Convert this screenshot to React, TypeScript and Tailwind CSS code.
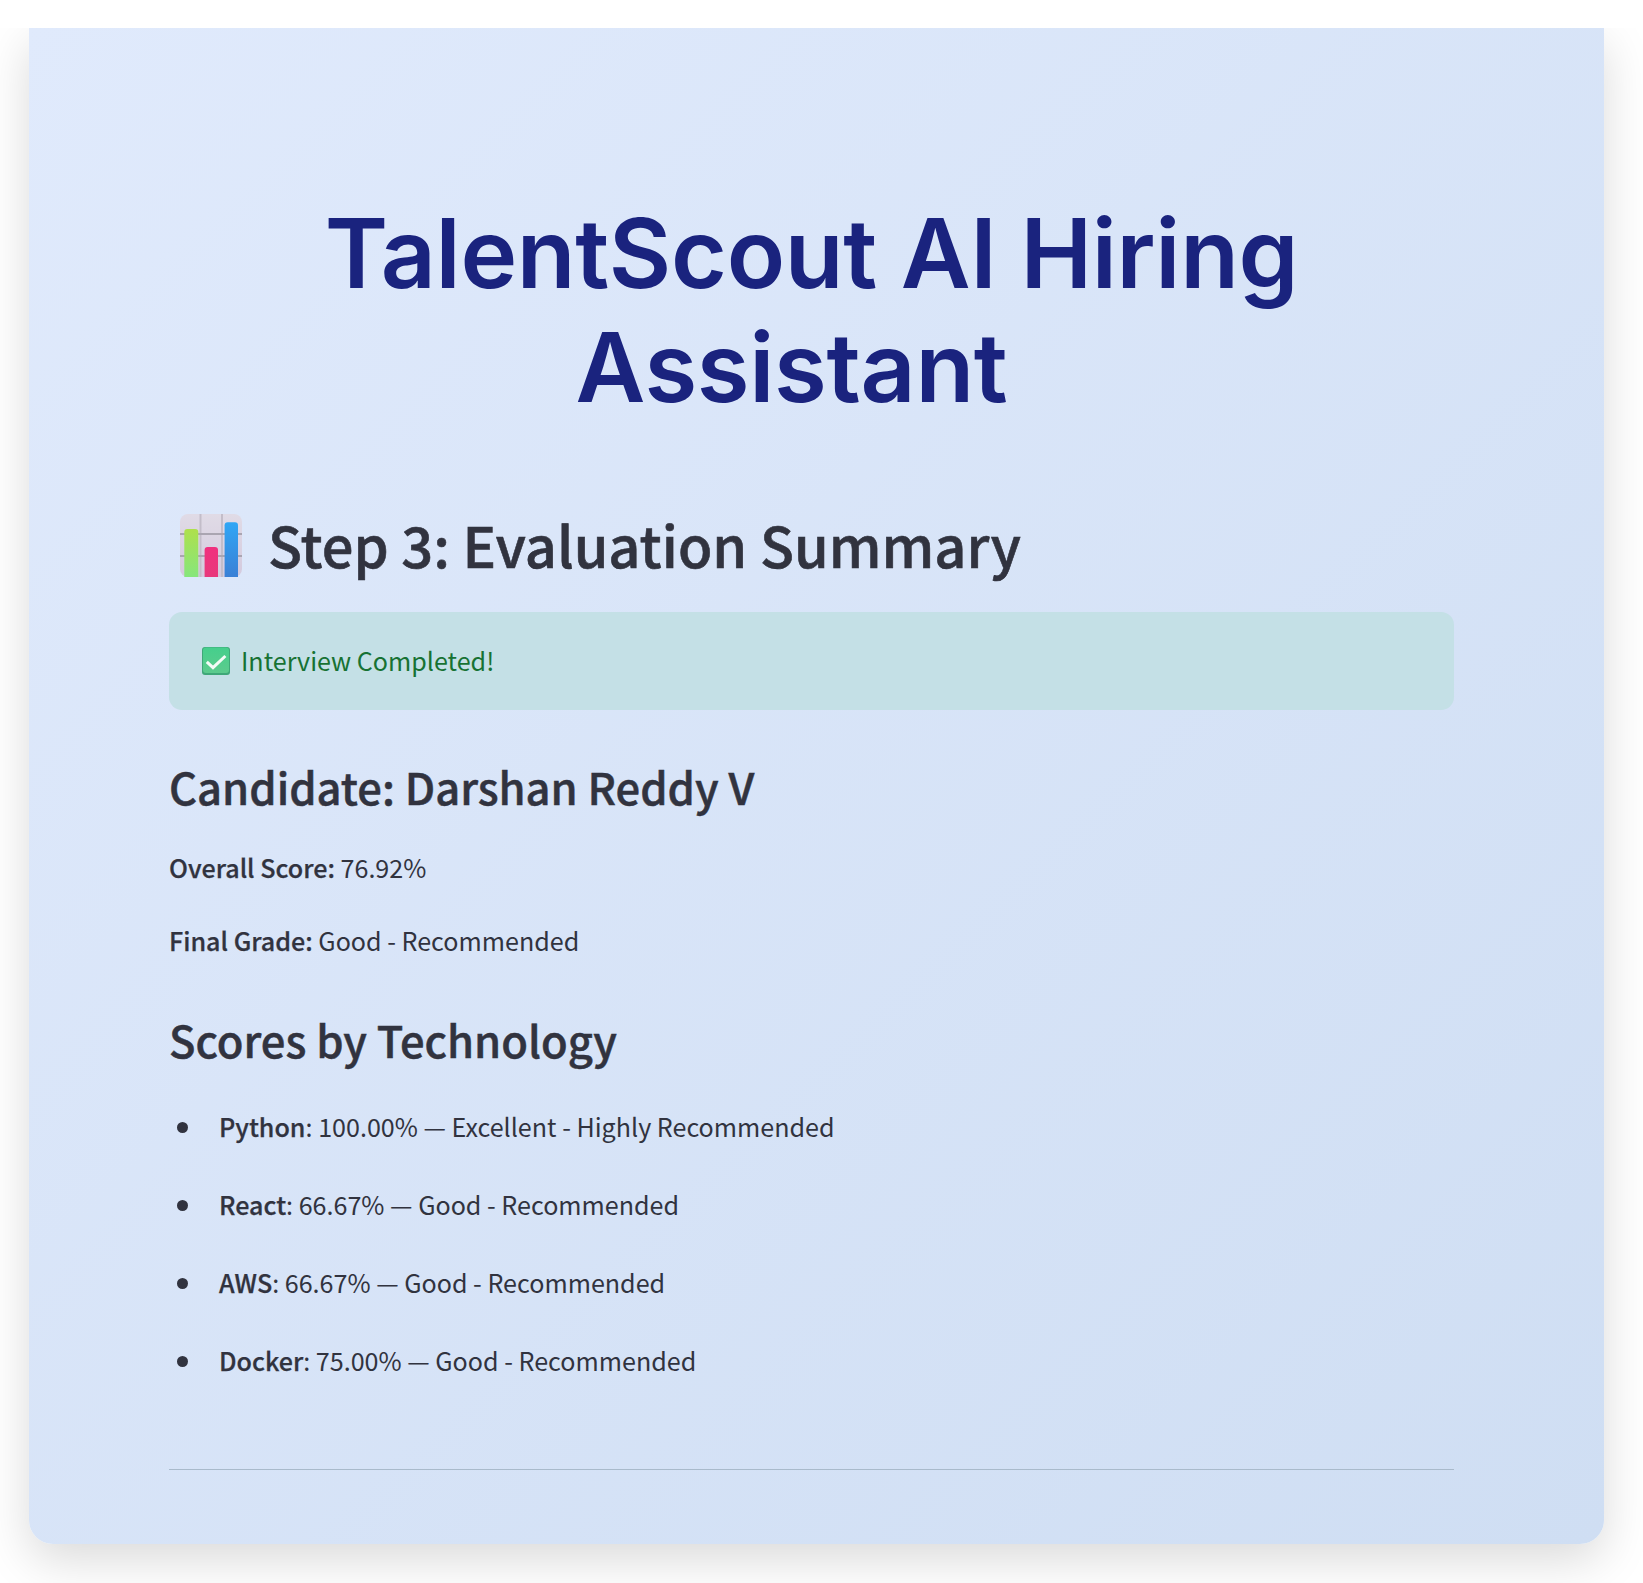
const sans = "font-['Noto_Sans_CJK_SC','Noto_Sans',sans-serif]";

const ChartEmoji = () => (
  <svg width="62" height="63" viewBox="0 0 62 63" className="shrink-0 mt-[2px]">
    <defs>
      <linearGradient id="lime" x1="0" y1="0" x2="0" y2="1">
        <stop offset="0" stopColor="#aee04c" />
        <stop offset="1" stopColor="#86e67c" />
      </linearGradient>
      <linearGradient id="pink" x1="0" y1="0" x2="0" y2="1">
        <stop offset="0" stopColor="#f0307e" />
        <stop offset="1" stopColor="#e8387c" />
      </linearGradient>
      <linearGradient id="blue" x1="0" y1="0" x2="0" y2="1">
        <stop offset="0" stopColor="#2fa6f5" />
        <stop offset="1" stopColor="#3a80d6" />
      </linearGradient>
      <linearGradient id="paper" x1="0" y1="0" x2="0" y2="1">
        <stop offset="0" stopColor="#e0dbe6" />
        <stop offset="1" stopColor="#d4cade" />
      </linearGradient>
    </defs>
    <rect width="62" height="63" rx="8" fill="url(#paper)" />
    <path d="M20.5 0v63M42 0v63" stroke="#c3bdc9" strokeWidth="2" />
    <path d="M0 20h62M0 42h62" stroke="#aaa5b1" strokeWidth="2" />
    <path d="M4.3 63V18a3 3 0 0 1 3-3h8a3 3 0 0 1 3 3v45z" fill="url(#lime)" />
    <path d="M24.6 63V36a3 3 0 0 1 3-3h7.4a3 3 0 0 1 3 3v27z" fill="url(#pink)" />
    <path d="M44.6 63V11.3a3 3 0 0 1 3-3h7.4a3 3 0 0 1 3 3V63z" fill="url(#blue)" />
  </svg>
);

const CheckEmoji = () => (
  <svg width="28" height="28" viewBox="0 0 28 28" className="shrink-0">
    <defs>
      <linearGradient id="tick" x1="0" y1="0" x2="0" y2="1">
        <stop offset="0" stopColor="#45cf8c" />
        <stop offset="1" stopColor="#5ccb8d" />
      </linearGradient>
    </defs>
    <rect width="28" height="28" rx="3" fill="#3fa878" />
    <rect x="1" y="0.5" width="26" height="25.5" rx="3" fill="url(#tick)" />
    <path d="M4.8 14.8L11 20.6 23.4 9" fill="none" stroke="#f4fbf7" strokeWidth="3" />
  </svg>
);

const scores = [
  { name: "Python", text: "100.00% — Excellent - Highly Recommended" },
  { name: "React", text: "66.67% — Good - Recommended" },
  { name: "AWS", text: "66.67% — Good - Recommended" },
  { name: "Docker", text: "75.00% — Good - Recommended" },
];

export default function App() {
  return (
    <div className={`h-[1583px] overflow-hidden bg-white ${sans} text-[#31333f]`}>
      <div className="relative z-10 h-7 bg-white" />
      <div className="ml-[29px] w-[1575px] h-[1516px] rounded-b-[24px] bg-gradient-to-br from-[#e0eafc] to-[#cfdef3] shadow-[0_16px_48px_rgba(0,0,0,0.15)] pl-[140px] pr-[150px] pt-[168px]">
        <h1 className="m-0 text-center font-['Inter',sans-serif] font-semibold text-[#1a237e] text-[96px] leading-[114px] tracking-[-0.3px]">
          TalentScout AI Hiring
          <br />
          <span className="inline-block mr-[40px]">Assistant</span>
        </h1>
        <div className="mt-[82px] flex items-center gap-[26px] pl-[11px] h-[76px]">
          <ChartEmoji />
          <h2 className="m-0 text-[56px] leading-[76px] font-medium [-webkit-text-stroke:0.6px_#31333f]">Step 3: Evaluation Summary</h2>
        </div>
        <div className="mt-[30px] h-[98px] rounded-[13px] bg-[#c4e0e6] flex items-center gap-[11px] pl-[33px] pr-[32px] text-[#177233] text-[25.1px]">
          <CheckEmoji />
          <span>Interview Completed!</span>
        </div>
        <h3 className="m-0 mt-[48px] text-[43.5px] leading-[58px] font-medium [-webkit-text-stroke:0.5px_#31333f]">Candidate: Darshan Reddy V</h3>
        <p className="m-0 mt-[29px] text-[25.1px] leading-[44px]">
          <strong className="font-medium [-webkit-text-stroke:0.25px_#31333f]">Overall Score:</strong> 76.92%
        </p>
        <p className="m-0 mt-[29px] text-[25.1px] leading-[44px]">
          <strong className="font-medium [-webkit-text-stroke:0.25px_#31333f]">Final Grade:</strong> Good - Recommended
        </p>
        <h3 className="m-0 mt-[49px] text-[43.5px] leading-[58px] font-medium [-webkit-text-stroke:0.5px_#31333f]">Scores by Technology</h3>
        <ul className="m-0 mt-[36px] p-0 flex flex-col gap-[34px]">
          {scores.map((s) => (
            <li key={s.name} className="flex items-center h-[44px] text-[25.1px]">
              <span className="ml-[8px] w-[11px] h-[11px] rounded-full bg-[#31333f]" />
              <span className="ml-[31px]">
                <strong className="font-medium [-webkit-text-stroke:0.25px_#31333f]">{s.name}</strong>: {s.text}
              </span>
            </li>
          ))}
        </ul>
        <hr className="mt-[86px] border-0 border-t border-[#a9bacb]" />
      </div>
    </div>
  );
}
